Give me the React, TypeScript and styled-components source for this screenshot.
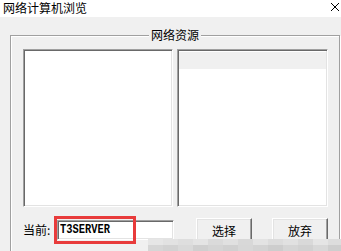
import React from "react";
import styled, { createGlobalStyle } from "styled-components";

const Global = createGlobalStyle`
  html, body { margin: 0; padding: 0; background: #f0f0f0; overflow: hidden; }
  body { width: 341px; height: 251px; font-family: "Noto Sans CJK SC", "Noto Sans", sans-serif; }
`;

const Window = styled.div`
  position: relative;
  width: 341px;
  height: 251px;
  background: #f0f0f0;
  display: flex;
  flex-direction: column;
  overflow: hidden;
`;

const TitleBar = styled.div`
  height: 21px;
  background: #ffffff;
  display: flex;
  align-items: center;
  justify-content: space-between;
  padding: 0 1px 0 3px;
  box-sizing: border-box;
  font-size: 12px;
  color: #000;
`;

const TitleText = styled.span`
  line-height: 18px;
  margin-top: -1px;
`;

const CloseIcon = styled.svg`
  width: 10px;
  height: 10px;
  margin-top: -4px;
`;

const Body = styled.div`
  padding: 18px 0 0 10px;
`;

const GroupBox = styled.div`
  position: relative;
  width: 330px;
  height: 230px;
  box-sizing: border-box;
  border: 1px solid #a0a0a0;
  box-shadow: inset 1px 1px 0 #ffffff, 1px 1px 0 #ffffff;
  padding: 13px 0 0 12px;
  display: flex;
  flex-direction: column;
`;

const Caption = styled.span`
  position: absolute;
  top: -9px;
  left: 50%;
  transform: translateX(-50%);
  background: #f0f0f0;
  padding: 0 2px;
  font-size: 12px;
  line-height: 16px;
  color: #000;
`;

const Lists = styled.div`
  display: grid;
  grid-template-columns: 150px 151px;
  column-gap: 4px;
  height: 158px;
`;

const ListBox = styled.div`
  box-sizing: border-box;
  background: #ffffff;
  border-style: solid;
  border-width: 1px;
  border-color: #a0a0a0 #ffffff #ffffff #a0a0a0;
  box-shadow: inset 1px 1px 0 #696969, inset -1px -1px 0 #e3e3e3;
  padding: 1px;
  display: flex;
  flex-direction: column;
`;

const ListHeader = styled.div`
  height: 17px;
  margin-top: 1px;
  background: #f0f0f0;
`;

const BottomRow = styled.div`
  display: flex;
  align-items: center;
  margin-top: 10px;
  height: 26px;
`;

const Label = styled.span`
  width: 34px;
  font-size: 12px;
  line-height: 16px;
  color: #000;
`;

const TextBox = styled.div`
  box-sizing: border-box;
  width: 117px;
  height: 20px;
  background: #ffffff;
  border-style: solid;
  border-width: 1px;
  border-color: #a0a0a0 #ffffff #ffffff #a0a0a0;
  box-shadow: inset 1px 1px 0 #696969, inset -1px -1px 0 #e3e3e3;
  display: flex;
  align-items: center;
  padding-left: 2px;
  overflow: hidden;
`;

const ValueText = styled.span`
  display: inline-block;
  font-family: "Liberation Mono", monospace;
  font-weight: bold;
  font-size: 13px;
  line-height: 14px;
  color: #000;
  transform: scaleX(0.8);
  transform-origin: left center;
  white-space: nowrap;
`;

const Button = styled.div<{ $gap: number }>`
  box-sizing: border-box;
  width: 56px;
  height: 24px;
  margin-left: ${(p) => p.$gap}px;
  background: #f0f0f0;
  border-style: solid;
  border-width: 1px;
  border-color: #ffffff #696969 #696969 #ffffff;
  box-shadow: inset -1px -1px 0 #a0a0a0, inset 1px 1px 0 #e3e3e3;
  display: flex;
  align-items: center;
  justify-content: center;
  font-size: 12px;
  color: #000;
`;

const Highlight = styled.div`
  position: absolute;
  left: 54px;
  top: 216px;
  width: 82px;
  height: 28px;
  box-sizing: border-box;
  border: 3px solid #e83b3b;
  pointer-events: none;
`;

const Mosaic = styled.div`
  position: absolute;
  left: 148px;
  top: 239px;
  display: grid;
  grid-template-columns: repeat(13, 15px);
  grid-auto-rows: 6px;
  pointer-events: none;
`;

const Tile = styled.div<{ $c: string }>`
  background: ${(p) => p.$c};
`;

const shades = [
  "#e6e6e6", "#e2e2e2", "#dedede", "#e4e4e4", "#dadada", "#e0e0e0", "#d8d8d8",
  "#e3e3e3", "#dcdcdc", "#e1e1e1", "#d9d9d9", "#e5e5e5", "#dddddd",
  "#d6d6d6", "#d2d2d2", "#d9d9d9", "#cfcfcf", "#d4d4d4", "#d0d0d0", "#d7d7d7",
  "#d3d3d3", "#cdcdcd", "#d5d5d5", "#d1d1d1", "#d8d8d8", "#cecece",
];

export default function App() {
  return (
    <>
      <Global />
      <Window>
        <TitleBar>
          <TitleText>网络计算机浏览</TitleText>
          <CloseIcon viewBox="0 0 10 10">
            <path d="M1 1 L9 9 M9 1 L1 9" stroke="#000" strokeWidth="1" fill="none" />
          </CloseIcon>
        </TitleBar>
        <Body>
          <GroupBox>
            <Caption>网络资源</Caption>
            <Lists>
              <ListBox />
              <ListBox>
                <ListHeader />
              </ListBox>
            </Lists>
            <BottomRow>
              <Label>当前:</Label>
              <TextBox>
                <ValueText>T3SERVER</ValueText>
              </TextBox>
              <Button $gap={22}>选择</Button>
              <Button $gap={20}>放弃</Button>
            </BottomRow>
          </GroupBox>
        </Body>
        <Highlight />
        <Mosaic>
          {shades.map((c, i) => (
            <Tile key={i} $c={c} />
          ))}
        </Mosaic>
      </Window>
    </>
  );
}
